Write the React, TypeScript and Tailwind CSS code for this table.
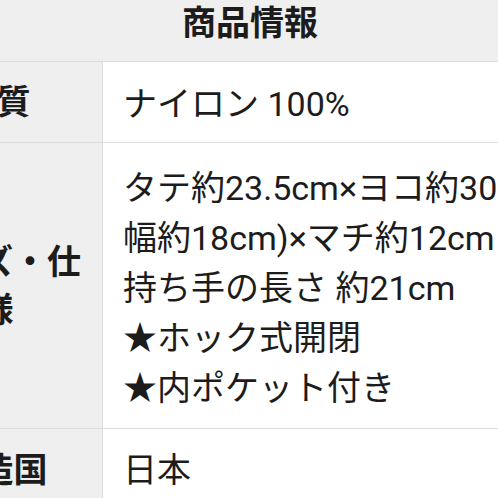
export default function App() {
  const rows: { label: string[]; lines: string[]; pad: string }[] = [
    { label: ["材質"], lines: ["ナイロン 100%"], pad: "pt-[17px] pb-[13px]" },
    {
      label: ["サイズ・仕", "様"],
      lines: [
        "タテ約23.5cm×ヨコ約30cm(底",
        "幅約18cm)×マチ約12cm",
        "持ち手の長さ 約21cm",
        "★ホック式開閉",
        "★内ポケット付き",
      ],
      pad: "pt-[20px] pb-[15px]",
    },
    { label: ["製造国"], lines: ["日本"], pad: "py-[16px]" },
  ];

  return (
    <div
      className="w-[498px] h-[498px] overflow-hidden bg-white text-[#1c1c1c]"
      style={{ fontFamily: 'Roboto, "Noto Sans CJK JP", sans-serif' }}
    >
      <div className="w-[718px] ml-[-109px]">
        {/* header */}
        <div className="bg-[#efefef] border-b border-[#dcdcdc] h-[62px] text-center text-[34px] font-bold leading-[46px]">
          商品情報
        </div>
        {rows.map((r) => (
          <div key={r.label.join("")} className="flex border-b border-[#dcdcdc]">
            <div className="w-[212px] shrink-0 bg-[#efefef] border-r border-[#dcdcdc] flex flex-col justify-center items-center px-4 text-[34px] font-bold leading-[48px] text-center">
              {r.label.map((l) => (
                <span key={l} className="whitespace-nowrap">
                  {l}
                </span>
              ))}
            </div>
            <div className={`flex-1 px-5 ${r.pad} text-[34px] leading-[50px]`}>
              {r.lines.map((l) => (
                <div key={l} className="whitespace-nowrap">
                  {l}
                </div>
              ))}
            </div>
          </div>
        ))}
      </div>
    </div>
  );
}
